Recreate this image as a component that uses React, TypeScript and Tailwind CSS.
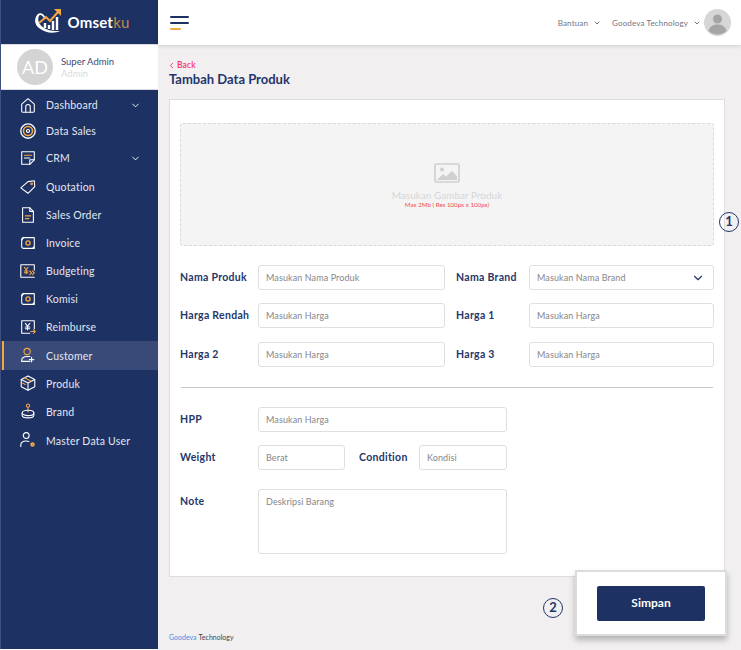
import { ReactNode } from 'react';
import { ChevronDown, ChevronLeft } from 'lucide-react';

const ORANGE = '#f5a742';

const Logo = () => (
  <svg width="30" height="28" viewBox="0 0 30 28" fill="none" className="shrink-0">
    <path d="M5 6C1 10 1 16 6 20c6 5 15 6 21 3-7 .5-14-1-18-4.500C5 15 4 10 7 6z" fill="white" />
    <path d="M5 7c3-2 6 0 7 4" stroke="white" strokeWidth="1.800" />
    <path d="M6 15l7-6 4 4 8-9" stroke={ORANGE} strokeWidth="2" />
    <path d="M21 1h7v7z" fill={ORANGE} />
    <path d="M12 15v5M16 17v4M20 13v9M24 9v13" stroke="white" strokeWidth="2.400" />
  </svg>
);

const icons: Record<string, ReactNode> = {
  home: (
    <>
      <path d="M3 9l7-6 7 6v8a1 1 0 01-1 1H4a1 1 0 01-1-1z" />
      <path d="M7.500 18v-6a2.500 2.500 0 015 0v6" />
    </>
  ),
  target: (
    <>
      <circle cx="10" cy="10" r="8" strokeWidth="1.500" />
      <circle cx="10" cy="10" r="5" stroke={ORANGE} strokeWidth="1.800" />
      <circle cx="10" cy="10" r="1.700" strokeWidth="1.300" />
    </>
  ),
  note: (
    <>
      <path d="M3 3h14v9l-5 5H3z" />
      <path d="M6 7h8" stroke={ORANGE} />
      <path d="M6 10h6M12 17v-5h5" />
    </>
  ),
  tag: (
    <>
      <path d="M2 11l8-7 7-1 .5 6.500L10 17z" />
      <circle cx="14" cy="6.500" r="1" stroke={ORANGE} />
    </>
  ),
  doc: (
    <>
      <path d="M4 2h8l4 4v12H4z" />
      <path d="M12 2v4h4" />
      <path d="M7 11h6M7 14h4" stroke={ORANGE} />
    </>
  ),
  invoice: (
    <>
      <path d="M5 4h12v12H5a2 2 0 01-2-2V6a2 2 0 012-2z" />
      <circle cx="10" cy="10" r="2.300" stroke={ORANGE} strokeWidth="1.500" />
      <path d="M3 7l2-3M15 16l2-2" />
    </>
  ),
  budget: (
    <>
      <path d="M17 9V3H2v14h15" />
      <path d="M6 6l2 2.500L10 6M8 8.500V13M6 10h4M6 12h4" stroke={ORANGE} />
      <path d="M12 10l2 2-2 2M15 10l2 2-2 2" stroke={ORANGE} />
    </>
  ),
  reimburse: (
    <>
      <path d="M12 17H3V3h14v9" />
      <path d="M7 6l2.500 3L12 6M9.500 9v4M7 10h5M7 12h5" stroke="white" />
      <path d="M13 15h5M16 13l2 2-2 2" stroke={ORANGE} />
    </>
  ),
  userPlus: (
    <>
      <circle cx="9" cy="5" r="3.500" stroke={ORANGE} />
      <path d="M12 16H3v-1C3 12 6 10.500 9 10.500h3" />
      <path d="M14 11.500v5M11.500 14h5" />
    </>
  ),
  box: (
    <>
      <path d="M10 1l7.500 4v8L10 17l-7.500-4V5z" />
      <path d="M2.500 5l7.500 4 7.500-4M10 9v8" />
      <path d="M6 3l7.500 4" stroke={ORANGE} />
      <path d="M4 9l3 1.500" stroke={ORANGE} />
    </>
  ),
  brand: (
    <>
      <circle cx="10" cy="3" r="1.800" stroke={ORANGE} />
      <path d="M10 5v5" stroke={ORANGE} />
      <ellipse cx="10" cy="11" rx="6.500" ry="3" />
      <path d="M3.500 11v2.500c0 1.700 3 3 6.500 3s6.500-1.300 6.500-3V11" />
    </>
  ),
  userGear: (
    <>
      <circle cx="8" cy="4" r="3.300" />
      <path d="M2 16v-1.500C2 11.500 5 10 8 10c1 0 2 .2 3 .5" />
      <circle cx="15" cy="14" r="1.500" stroke={ORANGE} strokeWidth="2" />
    </>
  ),
};

const menu = [
  { label: 'Dashboard', icon: 'home', chevron: true, height: 'h-[26px]' },
  { label: 'Data Sales', icon: 'target', height: 'h-[25px]' },
  { label: 'CRM', icon: 'note', chevron: true, height: 'h-[30px]' },
  { label: 'Quotation', icon: 'tag', height: 'h-[28px]' },
  { label: 'Sales Order', icon: 'doc', height: 'h-[28px]' },
  { label: 'Invoice', icon: 'invoice', height: 'h-[28px]' },
  { label: 'Budgeting', icon: 'budget', height: 'h-[28px]' },
  { label: 'Komisi', icon: 'invoice', height: 'h-[28px]' },
  { label: 'Reimburse', icon: 'reimburse', height: 'h-[28px]' },
  { label: 'Customer', icon: 'userPlus', active: true, height: 'h-[29px]' },
  { label: 'Produk', icon: 'box', height: 'h-[28px]' },
  { label: 'Brand', icon: 'brand', height: 'h-[28px]' },
  { label: 'Master Data User', icon: 'userGear', height: 'h-[29px]' },
];

const Sidebar = () => (
  <aside className="flex h-[649px] w-[158px] shrink-0 flex-col border-l border-l-[#3d5180] bg-[#1e3163]">
    <div className="flex h-[44px] items-center justify-center gap-[4px] pl-[4px]">
      <Logo />
      <span className="text-[15px] font-bold tracking-[0.2px] text-white">
        Omset<span className="font-normal text-[#c48a45]">ku</span>
      </span>
    </div>
    <div className="flex h-[46px] items-center gap-[8px] border-y border-[#d8dbe4] bg-white pl-[16px]">
      <div className="flex h-[36px] w-[36px] items-center justify-center rounded-full bg-[#d4d4d4] text-[18px] text-white">
        AD
      </div>
      <div className="flex flex-col gap-[1px] text-[9.500px] leading-[11px]">
        <span className="text-[#3c4a78]">Super Admin</span>
        <span className="text-[#dadada]">Admin</span>
      </div>
    </div>
    <nav className="flex flex-col pt-[2px]">
      {menu.map((item) => (
        <div
          key={item.label}
          className={`relative flex items-center pl-[18px] pr-[17px] text-[10.500px] text-[#e4e7ef] ${item.height} ${
            item.active ? 'bg-[#394a78]' : ''
          }`}
        >
          {item.active && <div className="absolute inset-y-0 left-[1px] w-[2px] bg-[#f5a742]" />}
          <svg
            width="18"
            height="18"
            viewBox="0 0 20 20"
            fill="none"
            stroke="white"
            strokeWidth="1.200"
            strokeLinejoin="round"
            strokeLinecap="round"
            className="shrink-0"
          >
            {icons[item.icon]}
          </svg>
          <span className="ml-[9px] flex-1 pt-[2px] tracking-[0.2px]">{item.label}</span>
          {item.chevron && <ChevronDown size={11} strokeWidth={2} className="text-white" />}
        </div>
      ))}
    </nav>
  </aside>
);

const Header = () => (
  <header className="relative flex h-[45px] items-center justify-between bg-white pl-[12px] pr-[10px] shadow-[0_1px_4px_rgba(0,0,0,0.15)]">
    <div className="flex w-[19px] flex-col gap-[4px]">
      <div className="h-[2px] w-full rounded-full bg-[#1e3163]" />
      <div className="h-[2px] w-full rounded-full bg-[#1e3163]" />
      <div className="h-[2px] w-[11px] rounded-full bg-[#f5a742]" />
    </div>
    <div className="flex items-center text-[8px] tracking-[0.15px] text-[#6f7480]">
      <span>Bantuan</span>
      <ChevronDown size={8} strokeWidth={2.500} className="ml-[5px] text-[#555a66]" />
      <span className="ml-[11px]">Goodeva Technology</span>
      <ChevronDown size={8} strokeWidth={2.500} className="ml-[5px] text-[#555a66]" />
      <svg width="27" height="27" viewBox="0 0 27 27" className="ml-[3px]">
        <circle cx="13.500" cy="13.500" r="13.500" fill="#d6d6d6" />
        <circle cx="13.500" cy="10" r="4.500" fill="#a5a5a5" />
        <path d="M4.500 22c1-5 5-6.500 9-6.500s8 1.500 9 6.500a13.500 13.500 0 01-18 0z" fill="#a5a5a5" />
      </svg>
    </div>
  </header>
);

const Label = ({ children, className = '' }: { children: ReactNode; className?: string }) => (
  <span className={`text-[10.500px] font-bold tracking-[0.3px] text-[#24366b] ${className}`}>{children}</span>
);

const Field = ({ placeholder, className = '', select }: { placeholder: string; className?: string; select?: boolean }) => (
  <div
    className={`flex items-center justify-between rounded-[3px] border border-[#dfdfdf] bg-white pl-[7px] pr-[8px] text-[9px] tracking-[0.1px] text-[#85868b] ${className}`}
  >
    <span>{placeholder}</span>
    {select && <ChevronDown size={14} strokeWidth={2} className="text-[#24366b]" />}
  </div>
);

const Row = ({ left, leftPh, right, rightPh, select, className = '' }: { left: string; leftPh: string; right: string; rightPh: string; select?: boolean; className?: string }) => (
  <div className={`flex items-center ${className}`}>
    <Label className="w-[78px]">{left}</Label>
    <Field placeholder={leftPh} className="h-[25px] w-[187px]" />
    <Label className="ml-[11px] w-[73px]">{right}</Label>
    <Field placeholder={rightPh} select={select} className="h-[25px] w-[185px]" />
  </div>
);

export default function App() {
  return (
    <div className="relative flex h-[650px] w-[741px] overflow-hidden bg-white font-['Lato',sans-serif]">
      <Sidebar />
      <main className="flex h-[650px] flex-1 flex-col bg-[#f1eff0]">
        <Header />
        <div className="flex flex-1 flex-col pl-[11px]">
          <div className="-ml-[2px] mt-[15px] flex items-center text-[8.500px] font-semibold leading-[10px] tracking-[0.1px] text-[#f4386a]">
            <ChevronLeft size={9} strokeWidth={2.500} />
            <span className="ml-[1px]">Back</span>
          </div>
          <h1 className="mt-[1px] text-[13px] font-bold leading-[17px] text-[#24366b]">Tambah Data Produk</h1>
          <section className="mt-[11px] h-[478px] w-[556px] border border-[#dddddd] bg-white pl-[10px] pt-[23px]">
            <div className="flex h-[123px] w-[534px] flex-col items-center justify-center rounded-[3px] border border-dashed border-[#d9d9d9] bg-[#f4f4f4] pt-[3px]">
              <svg width="26" height="20" viewBox="0 0 26 20" fill="none">
                <rect x="1" y="1" width="24" height="18" rx="1.500" stroke="#d0d0d0" strokeWidth="1.700" />
                <circle cx="8" cy="6.500" r="2" fill="#d0d0d0" />
                <path d="M3 17l6-6 3 2.500L18 8l5 5v4z" fill="#d0d0d0" />
              </svg>
              <span className="mt-[6px] text-[10px] leading-[12px] text-[#d6d6d6]">Masukan Gambar Produk</span>
              <span className="text-[6.200px] leading-[8px] text-[#f24b4b]">Max 2Mb ( Res 100px x 100px)</span>
            </div>
            <div className="w-[534px]">
              <Row className="mt-[19px]" left="Nama Produk" leftPh="Masukan Nama Produk" right="Nama Brand" rightPh="Masukan Nama Brand" select />
              <Row className="mt-[13px]" left="Harga Rendah" leftPh="Masukan Harga" right="Harga 1" rightPh="Masukan Harga" />
              <Row className="mt-[14px]" left="Harga 2" leftPh="Masukan Harga" right="Harga 3" rightPh="Masukan Harga" />
              <div className="ml-[1px] mt-[20px] h-px w-[532px] bg-[#c9c9c9]" />
              <div className="mt-[19px] flex items-center">
                <Label className="w-[78px]">HPP</Label>
                <Field placeholder="Masukan Harga" className="h-[25px] w-[249px]" />
              </div>
              <div className="mt-[13px] flex items-center">
                <Label className="w-[78px]">Weight</Label>
                <Field placeholder="Berat" className="h-[25px] w-[87px]" />
                <Label className="ml-[14px] w-[60px]">Condition</Label>
                <Field placeholder="Kondisi" className="h-[25px] w-[88px]" />
              </div>
              <div className="mt-[19px] flex items-start">
                <Label className="mt-[5px] w-[78px]">Note</Label>
                <div className="h-[65px] w-[249px] rounded-[3px] border border-[#dfdfdf] bg-white pl-[7px] pt-[5px] text-[9px] tracking-[0.1px] text-[#85868b]">
                  Deskripsi Barang
                </div>
              </div>
            </div>
          </section>
          <div className="relative mt-auto flex items-end pb-[8px] text-[7px] leading-[10px]">
            <span className="text-[#4a90e2]">Goodeva</span>
            <span className="ml-[2px] text-[#444444]">Technology</span>
          </div>
        </div>
      </main>
      {/* nomor anotasi + popup simpan */}
      <div className="absolute left-[719px] top-[212px] flex h-[20px] w-[20px] items-center justify-center rounded-full border-[1.500px] border-[#24366b] text-[13px] font-bold text-[#24366b]">
        1
      </div>
      <div className="absolute left-[543px] top-[598px] flex h-[20px] w-[20px] items-center justify-center rounded-full border-[1.500px] border-[#24366b] text-[13px] font-bold text-[#24366b]">
        2
      </div>
      <div className="absolute left-[575px] top-[570px] flex h-[66px] w-[152px] items-center justify-center border-2 border-[#dcdcdc] bg-white shadow-[0_4px_6px_rgba(0,0,0,0.25)]">
        <button className="h-[35px] w-[108px] rounded-[2px] bg-[#1e3163] text-[12px] font-bold text-white">Simpan</button>
      </div>
    </div>
  );
}
